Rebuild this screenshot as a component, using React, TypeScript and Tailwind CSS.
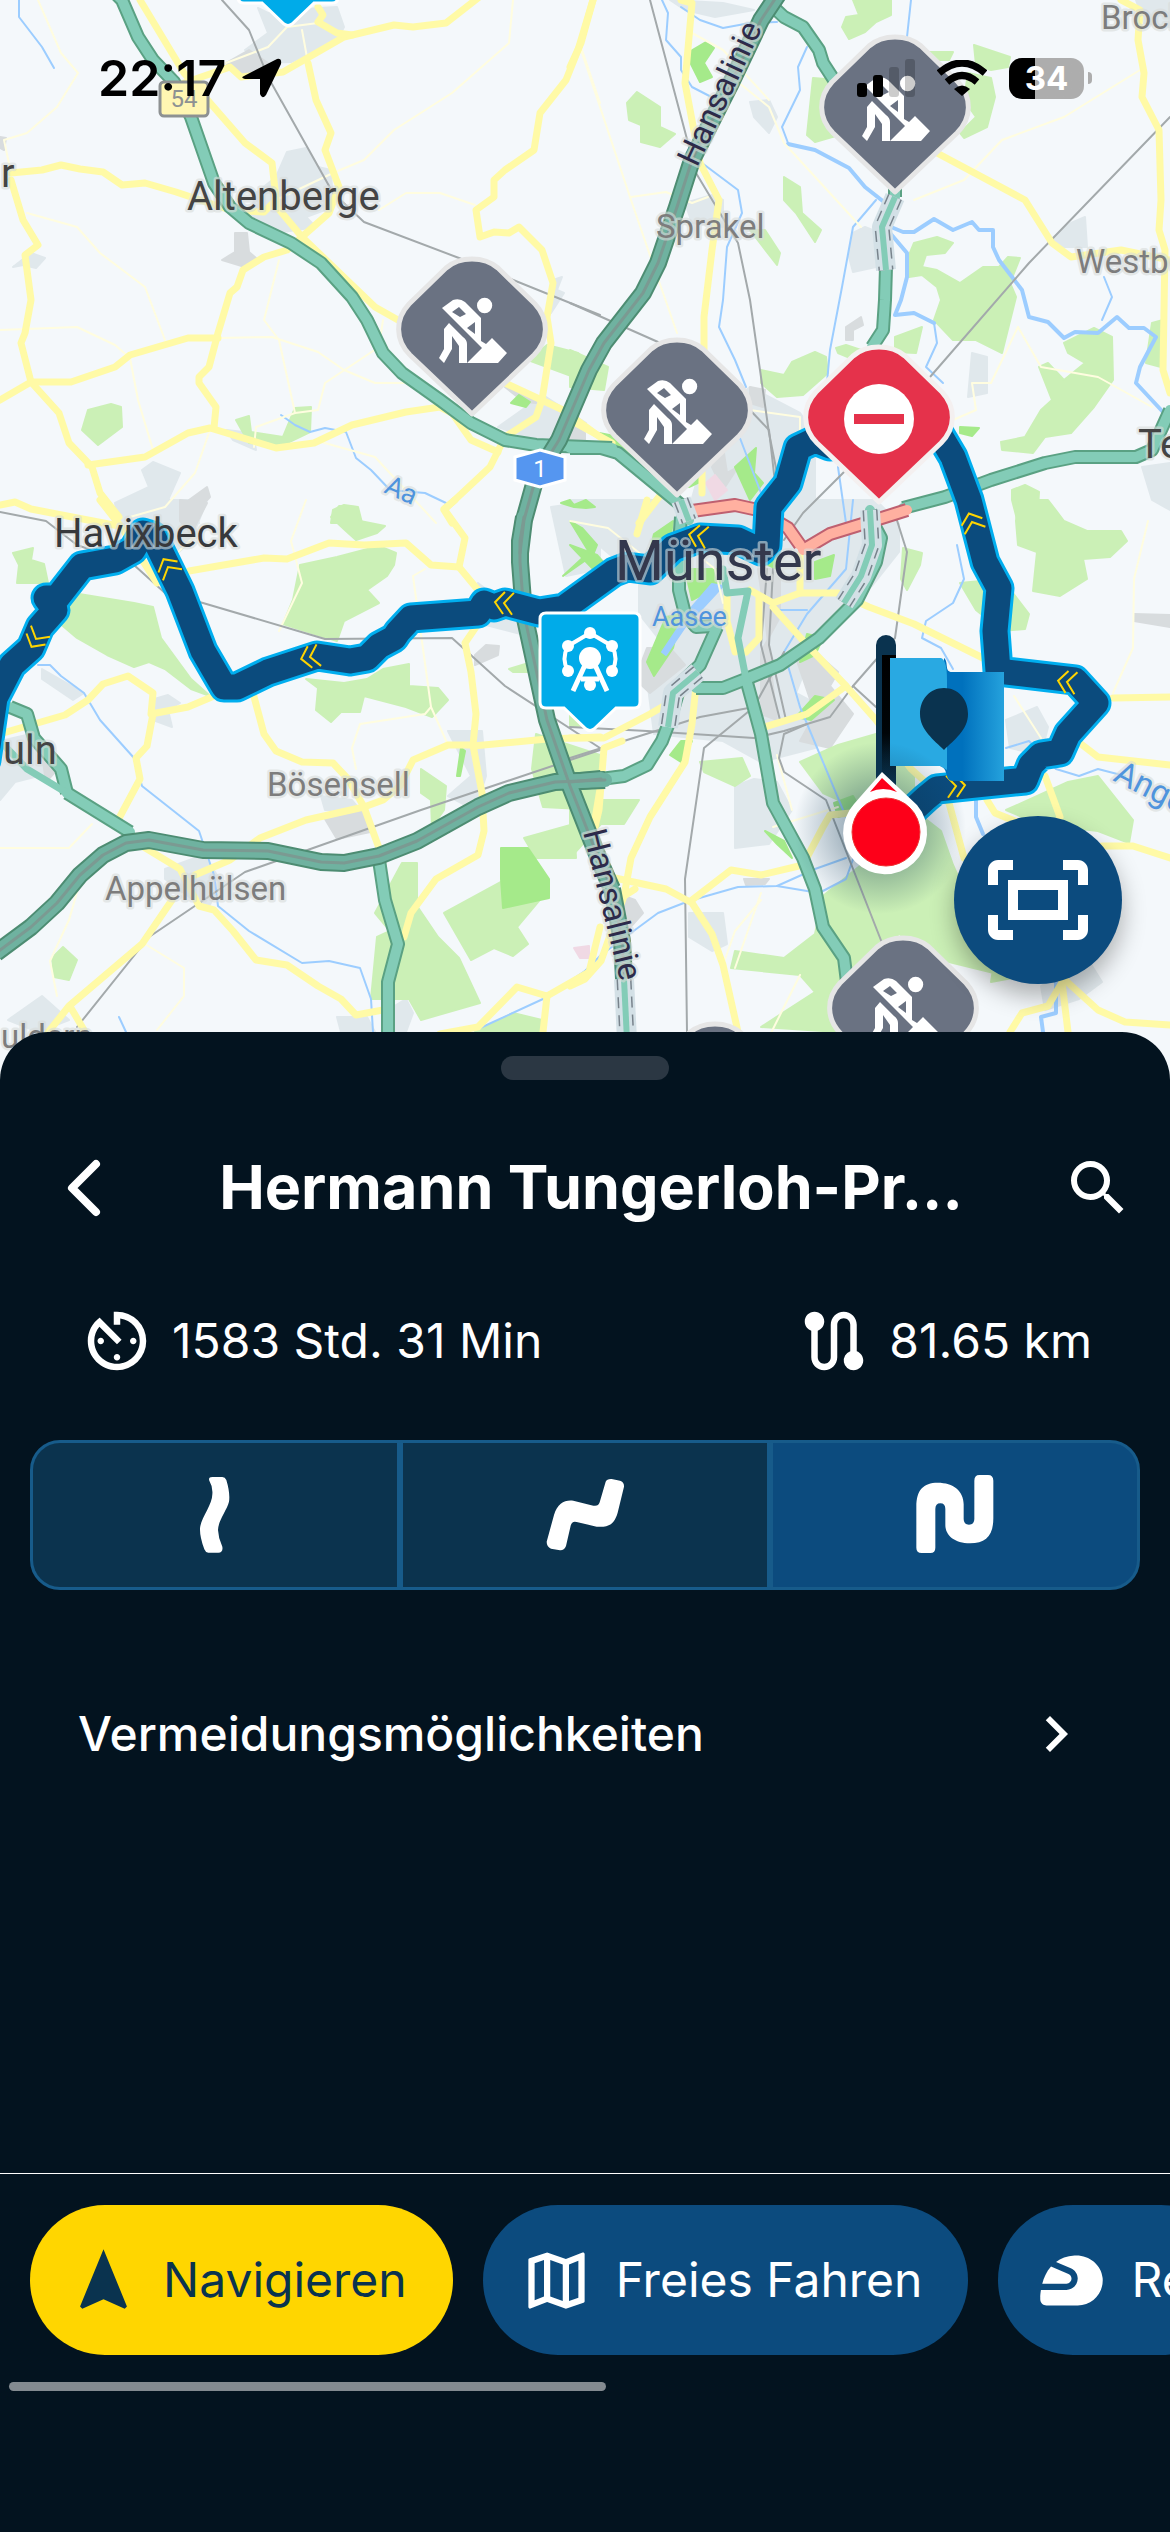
import { ChevronLeft } from 'lucide-react';
import {
  MdAvTimer,
  MdChevronRight,
  MdNavigation,
  MdOutlineFitScreen,
  MdOutlineMap,
  MdRoute,
  MdSearch,
  MdSportsMotorsports,
} from 'react-icons/md';

// The map is digitised in four tiles, each with its own local grid.
type Tile = 'nw' | 'ne' | 'sw' | 'se';
type Shape = [Tile, string];

const ORIGIN: Record<Tile, [number, number, number]> = {
  nw: [0, 0, 1 / 3],
  ne: [570, 0, 1 / 3],
  sw: [0, 500, 0.3444],
  se: [570, 500, 0.3444],
};

function project([tile, points]: Shape) {
  const [ox, oy, sy] = ORIGIN[tile];
  return points
    .split(' ')
    .map((p) => {
      const [x, y] = p.split(',').map(Number);
      return `${Math.round(ox + x * 0.3827)},${Math.round(oy + y * sy)}`;
    })
    .join(' ');
}

const urban: Shape[] = [
  ['nw', '675,25 700,40 830,25 880,20 900,80 880,120 760,185 680,190 640,150 700,100'],
  ['nw', '750,455 800,445 830,500 865,510 870,620 800,650 825,680 740,695 650,650 670,580 720,530'],
  ['nw', '370,1410 400,1385 470,1420 440,1500 500,1510 520,1568 310,1568 300,1510 390,1460'],
  ['nw', '1420,1185 1530,1270 1480,1310 1400,1320 1300,1280'],
  ['nw', '35,800 80,760 118,775 95,805 60,795'],
  ['nw', '1445,840 1468,830 1455,870 1475,880 1440,940'],
  ['nw', '590,1290 660,1300 668,1350 610,1320'],
  ['ne', '470,305 520,300 540,350 520,400 480,350'],
  ['ne', '300,610 370,585 400,600 400,680 320,670'],
  ['ne', '740,700 770,680 810,700 800,800 740,815 730,770'],
  ['ne', '1255,720 1310,670 1345,650 1350,740 1280,740'],
  ['ne', '1050,1060 1090,1070 1090,1180 1040,1190'],
  ['ne', '1495,1400 1568,1390 1568,1530 1520,1500'],
  ['ne', '470,1160 600,1240 640,1300 640,1568 300,1568 380,1250'],
  ['ne', '260,0 400,10 480,30 380,50 300,30'],
  ['ne', '1480,0 1568,0 1568,80 1500,70'],
  ['sw', '360,0 540,0 500,120 440,180 330,90'],
  ['sw', '110,490 220,560 190,580 110,520'],
  ['sw', '395,580 440,565 470,590 440,610 450,660 400,640'],
  ['sw', '1170,670 1260,670 1270,800 1240,900 1170,860 1230,800'],
  ['sw', '840,860 920,870 940,900 850,900'],
  ['sw', '430,1070 530,1030 580,1110 540,1190 430,1100'],
  ['sw', '0,700 80,680 140,790 40,820 0,870'],
  ['sw', '1250,240 1340,320 1400,400 1260,360'],
  ['sw', '1440,20 1568,0 1568,200 1480,220'],
  ['sw', '20,1510 110,1440 180,1510 100,1545'],
  ['sw', '880,1500 960,1500 980,1545 890,1545'],
  ['sw', '1000,1490 1060,1450 1080,1490 1060,1545 1000,1545'],
  ['se', '0,60 0,0 800,0 860,70 860,150 790,250 700,320 640,420 590,560 720,640 640,720 500,760 400,700 220,680 200,520 250,430 180,330 180,230'],
  ['se', '430,830 480,810 540,820 580,900 520,1000 430,1010'],
  ['se', '1140,640 1220,600 1250,660 1230,740 1150,720'],
  ['se', '1230,1410 1350,1330 1390,1400 1330,1450 1240,1480'],
  ['se', '310,1200 400,1200 410,1290 370,1310 310,1270'],
];

const industrial: Shape[] = [
  ['nw', '590,190 650,150 700,190 630,230'],
  ['nw', '615,700 645,700 650,755 670,775 640,800 580,780 615,755'],
  ['nw', '540,1460 550,1490 510,1540 495,1500'],
  ['nw', '0,410 15,415 10,450 0,445'],
  ['nw', '1320,1160 1400,1190 1400,1210 1370,1205'],
  ['ne', '720,980 760,950 765,975 740,990 740,1020 720,1020'],
  ['ne', '0,1270 40,1300 40,1320 0,1325'],
  ['ne', '470,1160 510,1170 505,1220 470,1210'],
  ['ne', '370,1400 400,1340 410,1420 440,1400 400,1470'],
  ['sw', '850,925 950,900 980,960 880,985'],
  ['sw', '1240,450 1270,420 1305,425 1300,450 1240,480'],
  ['sw', '470,0 540,10 500,100 470,60'],
  ['sw', '110,740 145,790 120,820'],
  ['se', '200,430 260,430 300,480 210,560 170,520'],
  ['se', '590,460 640,440 700,500 680,540 740,620 680,720 600,700 640,620'],
  ['se', '490,200 550,200 550,340 500,440 500,620 540,640 510,340'],
  ['se', '1475,330 1568,335 1568,370 1475,350'],
  ['se', '455,1100 520,1100 510,1115 460,1118'],
  ['se', '140,1150 170,1160 190,1200 150,1250'],
];

const woods: Shape[] = [
  ['nw', '290,1212 315,1220 320,1280 257,1335 215,1290 230,1230'],
  ['nw', '617,1260 650,1248 655,1295 740,1310 770,1225 812,1222 810,1295 740,1335 650,1330'],
  ['nw', '870,1530 900,1515 935,1520 945,1568 865,1568'],
  ['nw', '1430,1035 1510,1060 1530,1080 1540,1130 1500,1130 1380,1080'],
  ['ne', '740,0 838,0 840,45 800,65 770,95 730,118 710,80 720,50 755,45'],
  ['ne', '150,310 175,275 235,320 235,380 275,403 235,440 185,425 185,375 155,360'],
  ['ne', '635,235 700,240 720,400 640,425 620,405'],
  ['ne', '560,530 600,560 605,640 655,690 640,725 590,640 560,600'],
  ['ne', '1055,135 1150,170 1145,200 1100,210 1060,195'],
  ['ne', '1040,220 1100,235 1110,290 1090,380 1030,415 1020,400 1060,350 1030,300'],
  ['ne', '930,155 1000,155 990,180 950,180'],
  ['ne', '880,780 900,730 960,712 1000,730 980,760 930,765 920,800 960,810 1020,850 1080,800 1120,800 1145,770 1175,775 1150,850 1165,890 1130,1060 1060,1020 1000,1020 950,960 970,900 960,860 920,825 885,830'],
  ['ne', '500,1110 560,1125 580,1085 640,1055 670,1070 675,1120 610,1185 540,1190 500,1150'],
  ['ne', '850,1010 920,980 905,1060 850,1055'],
  ['ne', '695,1045 720,1035 760,1050 745,1080 700,1060'],
  ['ne', '1290,1030 1370,985 1415,1010 1420,1140 1370,1220 1310,1300 1240,1310 1210,1360 1130,1350 1125,1325 1190,1310 1230,1230 1260,1200 1225,1100 1250,1090 1290,1140 1345,1090 1300,1060'],
  ['ne', '1155,1470 1190,1455 1225,1475 1220,1568 1170,1568 1155,1500'],
  ['ne', '1520,970 1550,960 1545,1100 1505,1090'],
  ['ne', '470,690 510,690 550,760 540,795'],
  ['ne', '0,1050 100,1100 90,1170 0,1160'],
  ['sw', '865,50 885,18 930,20 940,60 1005,75 985,95 930,115 905,90'],
  ['sw', '785,190 880,165 990,135 1035,155 1030,190 1010,220 960,260 990,300 900,350 880,410 740,360 765,290'],
  ['sw', '45,240 50,190 35,155 85,140 80,175 115,185 125,240'],
  ['sw', '190,270 350,300 400,310 420,400 500,520 550,570 500,550 430,490 390,470 350,485 280,450 200,400 150,350'],
  ['sw', '800,520 900,530 960,520 1000,490 1070,475 1070,540 1145,545 1170,580 1130,630 1060,600 950,570 940,615 890,615 865,645 825,610 830,545'],
  ['sw', '1400,680 1568,740 1568,900 1420,890 1390,780'],
  ['sw', '1330,490 1390,470 1400,500 1340,500'],
  ['sw', '1100,780 1165,830 1160,900 1130,950 1125,870 1100,850'],
  ['sw', '1050,1055 1090,1055 1090,1180 1145,1270 1200,1330 1255,1460 1100,1510 1070,1450 970,1450 985,1270 1020,1250 980,1200'],
  ['sw', '1160,1200 1310,1110 1420,1150 1350,1240 1380,1290 1340,1325 1290,1300 1230,1335'],
  ['sw', '1370,980 1500,940 1505,1040 1400,1040'],
  ['sw', '135,1330 165,1298 200,1335 180,1395 140,1385'],
  ['sw', '1240,1545 1340,1490 1415,1510 1415,1545'],
  ['se', '1170,0 1250,0 1290,60 1350,90 1440,90 1455,120 1410,165 1340,170 1350,230 1280,280 1210,265 1220,150 1170,130 1165,60'],
  ['se', '870,140 920,155 915,190 880,260 865,230'],
  ['se', '1020,240 1130,230 1200,330 1190,375 1130,380 1060,320'],
  ['se', '600,760 700,710 800,680 900,800 900,900 970,960 1000,1060 1130,1380 980,1340 860,1260 720,1400 700,1545 500,1530 640,1430 600,1380 420,1360 430,1310 560,1330 640,1260 660,1150 760,1060 720,960 760,900 660,850'],
  ['se', '1140,900 1300,820 1380,800 1470,930 1460,995 1380,960 1290,950 1180,920'],
  ['se', '0,870 180,870 140,940 80,940 0,1040'],
  ['se', '340,760 450,750 470,800 430,830 350,790'],
  ['se', '0,580 70,570 60,650 0,660'],
  ['se', '1110,1330 1200,1380 1100,1400'],
];

const parks: Shape[] = [
  ['nw', '1335,1210 1355,1185 1385,1205 1375,1222'],
  ['nw', '1467,1510 1490,1500 1500,1515 1530,1500 1555,1520 1530,1525 1500,1520'],
  ['ne', '310,155 355,125 375,145 350,190 370,230 340,245 310,180'],
  ['ne', '75,1300 130,1310 180,1380 130,1350'],
  ['ne', '430,1400 485,1345 480,1420 505,1450 470,1500'],
  ['ne', '1020,1280 1070,1285 1050,1308 1020,1300'],
  ['ne', '310,1460 340,1400 350,1440'],
  ['sw', '1310,1010 1380,1010 1435,1100 1435,1155 1315,1185 1310,1100'],
  ['sw', '1490,60 1520,80 1560,130 1550,160 1470,220 1540,150'],
  ['sw', '1195,800 1205,720 1215,730 1203,800'],
  ['se', '0,130 70,160 110,210 60,200'],
  ['se', '200,470 250,340 290,330 270,430 220,510'],
  ['se', '300,200 400,200 390,250 320,290'],
  ['se', '620,390 660,400 640,450 600,470'],
  ['se', '500,140 550,130 540,200 500,180'],
  ['se', '640,570 690,580 630,640 590,630'],
  ['se', '690,880 740,860 760,900 700,920'],
  ['se', '510,960 560,990 580,1040 540,1000'],
  ['se', '260,740 290,700 320,700 290,760'],
  ['se', '220,100 270,60 260,120 200,180'],
  ['se', '640,180 690,160 680,220 640,230'],
];

const minor: Shape[] = [
  ['nw', '100,0 160,160 205,220 150,320 70,400 10,420 30,520'],
  ['nw', '1340,0 1330,130 1180,280 1030,390 950,480 870,520 720,600'],
  ['nw', '70,640 200,680 260,760 380,860 430,1020'],
  ['nw', '0,990 200,980 300,1035 340,1075 360,1200 400,1350'],
  ['nw', '570,1015 710,1010 830,1055 900,1110 980,1150 1060,1150 1180,1210'],
  ['nw', '730,780 690,960 730,1020 770,1240'],
  ['nw', '550,1290 510,1420 430,1520 340,1550'],
  ['nw', '590,190 700,140 750,80 830,70'],
  ['nw', '790,90 805,190'],
  ['nw', '1000,960 990,1040 850,1150 830,1230 770,1240 670,1280 665,1340'],
  ['nw', '990,630 1060,580 1150,580 1240,615'],
  ['nw', '820,1320 980,1370 1140,1568'],
  ['nw', '1520,150 1568,310'],
  ['ne', '1490,210 1290,350 1130,420 1030,540 900,600'],
  ['ne', '400,210 520,320 560,430 760,680'],
  ['ne', '30,150 160,600 220,800 280,1000'],
  ['ne', '320,100 400,150 520,300'],
  ['ne', '160,590 250,575 320,610 360,590'],
  ['ne', '1170,980 1230,1100 1380,1130 1520,1220'],
  ['ne', '1170,980 1100,1150 1050,1150 1060,1230 940,1290'],
  ['ne', '470,1230 600,1250 600,1400'],
  ['sw', '930,780 920,720 940,650 1110,620 1125,600 1080,220 1110,200'],
  ['sw', '1125,600 1170,710'],
  ['sw', '0,1010 180,1010 240,940'],
  ['sw', '380,1290 480,1360 480,1440 410,1540'],
  ['sw', '210,1110 180,1220 130,1340 150,1440'],
  ['sw', '800,0 760,120 790,240 730,380'],
  ['sw', '440,180 540,70'],
  ['se', '430,1360 500,1140'],
  ['se', '600,1380 520,1560'],
  ['se', '1510,60 1475,230 1470,430 1420,560'],
  ['se', '1160,570 1230,690'],
  ['se', '530,950 700,890'],
  ['se', '0,60 100,80 200,170'],
  ['se', '300,130 380,200 400,300'],
  ['se', '580,900 540,740'],
  ['se', '400,1350 430,1250 500,1160'],
];

const rails: Shape[] = [
  ['nw', '580,0 650,90 700,230 870,580 950,665 1200,775 1568,945'],
  ['ne', '210,0 330,520 440,730 470,900 520,1300 540,1420'],
  ['ne', '0,910 230,1025'],
  ['ne', '470,1230 520,1290 540,1500'],
  ['ne', '1568,350 1200,790 940,1130'],
  ['ne', '720,1410 610,1540 560,1620'],
  ['sw', '0,35 120,60 200,130 350,190 430,270 530,300 850,405 1180,400 1320,540 1568,720'],
  ['sw', '1568,725 1100,900 640,1080 390,1270 200,1530'],
  ['se', '0,750 340,630 480,600 560,440'],
  ['se', '0,660 200,670 480,690 560,670 680,630 740,540 850,400 880,150 850,40'],
  ['se', '620,650 560,680 545,750 560,790 670,870 820,1300'],
  ['se', '480,600 350,720 300,1100 305,1545'],
  ['se', '550,640 500,420 515,200'],
  ['se', '565,640 520,420 530,200'],
  ['se', '740,540 800,600'],
];

const streams: Shape[] = [
  ['nw', '50,0 50,50 110,140 140,205'],
  ['nw', '735,1245 770,1275 810,1295 850,1285 905,1295 930,1375 970,1410 1020,1470 1110,1480 1165,1510'],
  ['ne', '240,0 255,40 250,120 290,170 290,210 320,260 400,310'],
  ['ne', '290,20 340,60 400,85 470,70 540,65'],
  ['ne', '345,490 440,570 450,640 410,740 400,900 390,980 430,1080 460,1160'],
  ['ne', '890,0 880,110'],
  ['ne', '620,140 595,200 600,270 555,380 570,430'],
  ['ne', '800,600 740,680 710,860 680,1050 670,1180'],
  ['ne', '950,970 960,1030 930,1100 975,1150'],
  ['ne', '1395,830 1415,890 1390,960'],
  ['ne', '440,1300 500,1480 530,1568'],
  ['ne', '700,1400 720,1568'],
  ['sw', '100,480 130,478 160,510 220,560 260,640 350,750 370,830 520,960 560,1090 570,1180 650,1250 790,1345 860,1340 940,1360 970,1450 975,1545'],
  ['sw', '310,1500 330,1545'],
  ['sw', '1250,1535 1420,1450 1568,1340'],
  ['se', '0,1410 80,1320 230,1200 310,1165 440,1125 540,1120 640,1070 720,1040'],
  ['se', '740,0 720,200 620,330 560,440 600,600 720,920 750,1010 720,1100 650,1140 540,1120'],
  ['se', '1010,130 1030,230 1000,300 930,350 920,400 970,430 1000,490'],
  ['se', '540,320 620,320'],
  ['se', '1140,720 1200,700 1270,780 1330,800 1380,780 1450,800'],
];

const rivers: Shape[] = [
  ['ne', '570,433 640,450 730,505 770,560 820,605'],
  ['ne', '840,680 870,697 900,695 950,658 1000,690 1050,665 1070,690 1105,690 1105,740 1120,780 1180,870 1200,950 1250,965 1290,1015 1320,995 1380,1000 1430,950 1460,985 1500,985 1530,1010 1490,1100 1480,1150 1550,1235'],
  ['ne', '835,700 880,760 880,830 865,900 850,945 900,940 950,970'],
  ['se', '1060,870 1060,920 1080,970'],
  ['se', '1270,1400 1270,1490 1230,1500 1235,1545'],
];

const secondary: Shape[] = [
  ['nw', '365,0 480,220 640,430 710,490 725,620 790,710 980,920 1040,960'],
  ['nw', '480,250 600,200 630,230 740,215 900,110 1030,75 1080,80 1165,68 1250,-5'],
  ['nw', '830,20 845,45 830,65 880,100 920,105'],
  ['nw', '805,190 825,300 865,400 850,450 885,560 860,640 750,750 690,770 635,810 620,860 600,880 570,1000 545,1100 520,1130 520,1150 565,1220 560,1285'],
  ['nw', '1550,0 1510,150 1480,240 1410,340 1395,450 1320,510 1290,540 1290,590 1245,630 1255,710 1290,695 1330,700 1355,680 1415,750 1445,850 1430,950 1440,1030 1415,1200 1400,1250 1320,1310 1280,1400 1160,1530 1180,1568'],
  ['nw', '1320,1150 1470,1230 1568,1310'],
  ['nw', '30,520 110,510 160,495 210,508 270,515 320,555 380,550 460,575 600,630 690,635 720,600'],
  ['nw', '30,540 60,660 100,735 65,765 80,900 65,1000 55,1030 80,1145 155,1240 180,1330 240,1400 260,1480 310,1550'],
  ['nw', '0,1200 80,1145 185,1145 300,1100 340,1065 490,1015 570,1015'],
  ['nw', '230,1395 380,1370 490,1300 550,1285 720,1345 820,1330 920,1275 1060,1235 1150,1220 1180,1240 1230,1320 1300,1355'],
  ['ne', '60,0 30,130 0,200'],
  ['ne', '290,0 320,10 300,250 340,490 390,600 370,750 350,950 350,1050'],
  ['ne', '345,1400 345,1480'],
  ['ne', '960,460 1190,600 1260,730 1310,770 1440,750 1568,780'],
  ['ne', '1440,0 1490,30 1485,120 1500,220 1495,290 1540,390 1545,600 1540,690 1555,750 1550,1110 1568,1180'],
  ['ne', '0,1260 110,1330'],
  ['ne', '240,1480 180,1568'],
  ['sw', '0,15 40,5 80,25 310,75'],
  ['sw', '260,0 320,80 410,240'],
  ['sw', '495,205 690,168 750,170 860,125 950,132 1060,125 1125,190 1200,195 1250,260'],
  ['sw', '1190,0 1160,25 1215,110 1200,195'],
  ['sw', '1250,360 1215,415 1230,500 1245,620 1235,710 1260,850 1265,960 1250,1030 1140,1100 1075,1200 1055,1270'],
  ['sw', '1235,710 1170,712 1080,755 1045,830 1000,870 950,890 800,930 680,980 600,1045 510,1090'],
  ['sw', '1235,715 1430,695 1568,688'],
  ['sw', '660,560 690,680 720,730 790,760 870,765 910,810 950,890 990,1010'],
  ['sw', '0,680 170,625 230,580 270,535 335,510 400,560 395,620 490,600 560,570'],
  ['sw', '400,620 385,715 355,750 365,810 305,935'],
  ['sw', '370,1005 470,1070 520,1180 560,1190 610,1250 670,1335 750,1350 830,1410 890,1450 930,1495 1000,1480'],
  ['sw', '450,1160 370,1290 180,1470 110,1568'],
  ['sw', '185,1475 220,1540'],
  ['sw', '1150,1550 1250,1530 1350,1415 1430,1440 1540,1370 1568,1240'],
  ['sw', '1430,1440 1420,1545'],
  ['sw', '1568,840 1550,960'],
  ['se', '0,690 90,690 210,620 290,570'],
  ['se', '135,700 90,720 75,900 65,950'],
  ['se', '330,540 320,650 300,760 210,920 160,1040 140,1150'],
  ['se', '80,1090 250,1130 320,1170 370,1260 400,1350 440,1545'],
  ['se', '320,1160 420,1075 500,1090 610,1060 660,950 680,915 760,905'],
  ['se', '490,665 620,620 720,540'],
  ['se', '530,310 620,420 720,540 800,640 890,780 990,880 1030,1040'],
  ['se', '470,260 530,300 600,270 700,270 780,310 900,360 1080,460'],
  ['se', '600,160 600,270'],
  ['se', '495,280 495,400 460,440'],
  ['se', '410,280 410,350 430,440'],
  ['se', '170,1130 140,1150 80,1340 40,1390 0,1410'],
  ['se', '1420,575 1568,572'],
  ['se', '1300,680 1380,745 1568,770'],
  ['se', '1390,1005 1470,1005 1568,1040'],
  ['se', '1240,800 1280,920'],
  ['se', '1290,1390 1250,1470 1180,1490 1150,1545'],
  ['se', '1285,1400 1300,1545'],
  ['se', '1290,1390 1380,1480 1450,1515 1568,1525'],
  ['se', '1090,870 1110,910 1180,940'],
  ['se', '175,100 200,0'],
];

const trunks: Shape[] = [
  ['nw', '300,-20 320,0 360,110 400,180 455,245 500,350 560,550 600,620 650,670 760,730 840,790 920,890 960,960 1000,1060 1050,1120 1150,1200 1230,1270 1320,1320 1400,1335 1600,1345'],
  ['ne', '0,1345 80,1345 125,1360 290,1515 310,1560'],
  ['ne', '520,10 560,50 610,80 650,150 660,190 690,240 848,400 848,590'],
  ['ne', '825,800 822,900 818,990 790,1040'],
  ['ne', '870,1525 980,1490 1100,1440 1240,1390 1320,1370 1480,1370 1520,1350 1568,1230'],
  ['se', '290,50 285,130 285,260 300,330 330,370 370,365'],
  ['se', '385,370 340,480 290,530 260,640 240,700 200,770 140,800 60,812'],
  ['se', '330,545 400,545 460,520 550,480 650,400 750,290 800,180 812,110 790,60 785,30'],
  ['se', '460,520 500,680 530,880 610,1040 640,1130 660,1240 715,1330 725,1400'],
  ['sw', '25,600 70,620 90,690 160,780 175,850'],
  ['sw', '175,850 340,965'],
  ['sw', '990,1045 1005,1160 1040,1290 1015,1400 1015,1560'],
];

const innerRing: Shape[] = [
  ['se', '400,200 410,270 465,265 440,400 460,520'],
  ['sw', '0,700 70,780 175,850'],
];

const jams: Shape[] = [
  ['se', '300,35 430,15 490,30 570,80 600,130'],
  ['se', '610,145 680,100 780,65 880,30'],
];

const motorways: Shape[] = [
  ['ne', '545,-20 500,60 420,250 320,480 280,620 230,790 190,880 90,1030 50,1110 -30,1320 -90,1430 -120,1560 -131,1660'],
  ['sw', '1370,50 1358,120 1358,180 1370,330 1430,640 1490,830 1568,1050 1600,1130'],
  ['sw', '-10,1315 80,1240 150,1170 210,1090 270,1030 330,995 390,988 530,1015 700,1020 840,1050 900,1055 990,1035 1090,990 1250,890 1330,850 1450,820 1580,812'],
  ['se', '0,820 80,810'],
  ['se', '110,1130 135,1280 142,1390'],
];

const tunnels: Shape[] = [
  ['ne', '848,590 815,680 825,810'],
  ['se', '290,0 310,60'],
  ['se', '142,1390 148,1568'],
  ['se', '335,500 270,560 255,660'],
  ['se', '785,30 790,130 760,220 715,300'],
];

const route =
  '900,822 926,798 937,789 1025,780 1031,765 1041,755 1060,752 1068,734 1096,703 1075,680 998,671 995,631 999,588 985,562 969,500 953,457 937,430 914,410 830,446 815,440 798,448 788,483 769,507 767,545 761,551 738,540 700,538 673,548 650,570 627,567 614,572 564,608 539,612 505,603 494,607 484,603 478,613 411,618 398,632 394,638 379,646 367,658 350,661 317,656 268,672 237,687 224,687 203,651 180,591 153,536 143,533 133,550 115,560 82,566 57,598 46,598 55,610 40,627 31,648 12,665 -5,698 -14,760';

const arrows: [number, number, number][] = [
  [168, 567, 60],
  [310, 657, -12],
  [504, 603, 5],
  [36, 639, -60],
  [698, 536, 10],
  [972, 522, 70],
  [1067, 682, 8],
  [956, 786, 175],
];

type Label = { text: string; x: number; y: number; size: number; color: string; rotate?: number };

const labels: Label[] = [
  { text: 'Altenberge', x: 187, y: 210, size: 40, color: '#444444' },
  { text: 'r', x: 1, y: 187, size: 40, color: '#444444' },
  { text: 'Havixbeck', x: 54, y: 547, size: 40, color: '#37393c' },
  { text: 'uln', x: 3, y: 764, size: 40, color: '#444444' },
  { text: 'Telgte', x: 1138, y: 458, size: 40, color: '#444444' },
  { text: 'Sprakel', x: 656, y: 238, size: 33, color: '#7d7d7d' },
  { text: 'Brock', x: 1101, y: 29, size: 33, color: '#7d7d7d' },
  { text: 'Westbevern', x: 1076, y: 273, size: 33, color: '#7d7d7d' },
  { text: 'Bösensell', x: 267, y: 796, size: 33, color: '#7d7d7d' },
  { text: 'Appelhülsen', x: 105, y: 900, size: 33, color: '#7d7d7d' },
  { text: 'uldern', x: 1, y: 1048, size: 33, color: '#7d7d7d' },
  { text: 'Münster', x: 615, y: 580, size: 56, color: '#34384d' },
  { text: 'Hansalinie', x: 697, y: 168, size: 33, color: '#2d2b4a', rotate: -65 },
  { text: 'Hansalinie', x: 583, y: 832, size: 33, color: '#2d2b4a', rotate: 76 },
  { text: 'Aasee', x: 652, y: 626, size: 27, color: '#4f94dd' },
  { text: 'Aa', x: 383, y: 492, size: 27, color: '#4f94dd', rotate: 24 },
  { text: 'Angel', x: 1112, y: 780, size: 33, color: '#4f94dd', rotate: 27 },
];

function Areas({ shapes, fill }: { shapes: Shape[]; fill: string }) {
  return (
    <g fill={fill} stroke={fill} strokeWidth={2} strokeLinejoin="round">
      {shapes.map((s, i) => (
        <polygon key={i} points={project(s)} />
      ))}
    </g>
  );
}

function Lines({ shapes, color, width, dash, cap = 'round' }: { shapes: Shape[]; color: string; width: number; dash?: string; cap?: 'round' | 'butt' }) {
  return (
    <g fill="none" stroke={color} strokeWidth={width} strokeLinejoin="round" strokeLinecap={cap} strokeDasharray={dash}>
      {shapes.map((s, i) => (
        <polyline key={i} points={project(s)} />
      ))}
    </g>
  );
}

const PIN_SHAPE =
  'M0 83L-62 24C-77 9 -77 -12 -63 -27L-26 -63C-12 -75 12 -75 26 -63L63 -27C77 -12 77 9 62 24Z';

function RoadworkPin({ x, y }: { x: number; y: number }) {
  return (
    <g transform={`translate(${x} ${y})`}>
      <path d={PIN_SHAPE} fill="#6a7282" stroke="#e6e6e6" strokeWidth="5" strokeLinejoin="round" />
      <g fill="#fff">
        <ellipse cx="12.6" cy="-25.5" rx="7.6" ry="7.8" />
        <path
          fillRule="evenodd"
          d="M-30 -23L-19 -31Q-12 -33 -7 -29L9 -13V10L14 13L20 7L35 22L26 32H-5L10 17ZM-20 -19L-12 -14L-6 -17L-13 -24ZM-5 -3L3 3V-9Z"
        />
        <path d="M-23 -8L-9 6Q-5 9 -5 13V32H-13V15L-20 5V18L-28 32L-33 27L-28 18V-2Z" />
      </g>
    </g>
  );
}

function ClosurePin({ x, y }: { x: number; y: number }) {
  return (
    <g transform={`translate(${x} ${y})`}>
      <path d={PIN_SHAPE} fill="#e5324b" stroke="#f4f0f0" strokeWidth="5" strokeLinejoin="round" />
      <circle r="35" fill="#fff" />
      <rect x="-25" y="-5" width="50" height="10" fill="#e5324b" />
    </g>
  );
}

function AttractionPin({ x, y }: { x: number; y: number }) {
  const cabins = [[0, -45], [22, -32], [22, -7], [0, 7], [-22, -7], [-22, -32]];
  return (
    <g transform={`translate(${x} ${y})`}>
      <path
        d="M-44 -65H44Q50 -65 50 -59V24Q50 30 44 30H26L4 51Q0 54 -4 51L-26 30H-44Q-50 30 -50 24V-59Q-50 -65 -44 -65Z"
        fill="#00abe9"
        stroke="#fff"
        strokeWidth="3"
      />
      <path d="M0 -45L22 -32Q29 -19 22 -7M0 -45L-22 -32Q-29 -19 -22 -7" fill="none" stroke="#fff" strokeWidth="4" />
      {cabins.map(([cx, cy]) => (
        <circle key={`${cx},${cy}`} cx={cx} cy={cy} r="6" fill="#fff" />
      ))}
      <circle cy="-20" r="11" fill="#fff" />
      <path d="M-5 -13L-17 13M5 -13L17 13M-9 1H9" fill="none" stroke="#fff" strokeWidth="5" />
    </g>
  );
}

function DestinationFlag() {
  return (
    <g>
      <rect x="876" y="635" width="20" height="165" rx="10" fill="#0a334f" />
      <rect x="882" y="655" width="14" height="130" fill="url(#pole)" />
      <path d="M944 658C949 662 944 672 952 672H1004V781H953C944 781 949 768 940 766Z" fill="url(#flag)" />
      <path d="M890 658H941Q947 660 947 680V770L940 766H890Z" fill="#29a9e2" />
      <path d="M944 688C958 688 968 699 968 714C968 730 954 740 944 750C934 740 920 730 920 714C920 699 930 688 944 688Z" fill="#0a334f" />
    </g>
  );
}

function PositionDot() {
  return (
    <g>
      <circle cx="880" cy="828" r="86" fill="url(#halo)" />
      <path d="M882 772L917 805A42 42 0 1 1 854 804Z" fill="#fff" />
      <circle cx="886" cy="832" r="34" fill="#fd0019" stroke="#e33" strokeWidth="1" />
      <path d="M882 778L897 792Q883 786 870 792Z" fill="#fd0019" />
    </g>
  );
}

function RouteMap() {
  return (
    <svg viewBox="0 0 1170 1080" className="block w-full h-auto bg-[#f4f8fb] font-['Roboto',sans-serif]" role="img" aria-label="Karte">
      <defs>
        <radialGradient id="halo">
          <stop offset="0.4" stopColor="#0a334f" stopOpacity="0.35" />
          <stop offset="1" stopColor="#0a334f" stopOpacity="0" />
        </radialGradient>
        <linearGradient id="pole" x1="0" y1="0" x2="0" y2="1">
          <stop offset="0" stopColor="#000" />
          <stop offset="0.6" stopColor="#000508" />
          <stop offset="1" stopColor="#0a334f" />
        </linearGradient>
        <linearGradient id="flag">
          <stop offset="0.15" stopColor="#0071bd" />
          <stop offset="0.35" stopColor="#0071bd" />
          <stop offset="1" stopColor="#25a2dd" />
        </linearGradient>
      </defs>

      <Areas shapes={urban} fill="#e0e8ec" />
      <Areas shapes={industrial} fill="#d8dcde" />
      <Areas shapes={woods} fill="#cbf0b6" />
      <Areas shapes={parks} fill="#a5ea8a" />
      <Areas shapes={[['se', '240,440 320,310 370,245 400,250 300,370 250,450']]} fill="#9ccdff" />
      <Areas shapes={[['ne', '355,1450 380,1425 410,1470 380,1500'], ['sw', '1500,1300 1540,1295 1540,1330 1515,1330']]} fill="#f0d9e4" />
      <Lines shapes={streams} color="#9ccdff" width={2} />
      <Lines shapes={rivers} color="#9ccdff" width={4} />
      <Lines shapes={minor} color="#fffde0" width={2} />
      <Lines shapes={rails} color="#a3a9ab" width={2} />
      <Lines shapes={secondary} color="#fffaa6" width={7} />
      <Lines shapes={trunks} color="#5aa183" width={14} cap="butt" />
      <Lines shapes={trunks} color="#83ccb7" width={10} />
      <Lines shapes={innerRing} color="#83ccb7" width={7} />
      <Lines shapes={jams} color="#bf6070" width={14} cap="butt" />
      <Lines shapes={jams} color="#ffb0a0" width={10} />
      <Lines shapes={motorways} color="#4d8c72" width={18} cap="butt" />
      <Lines shapes={motorways} color="#6fb2a0" width={14} />
      <Lines shapes={motorways} color="#7b9a92" width={3} />
      <Lines shapes={tunnels} color="#d3e0e6" width={20} cap="butt" />
      <Lines shapes={tunnels} color="#78838c" width={15} dash="11 7" cap="butt" />
      <Lines shapes={tunnels} color="#d3e0e6" width={12} cap="butt" />
      <Lines shapes={tunnels} color="#83ccb7" width={6} cap="butt" />

      <g fill="none" strokeLinejoin="round" strokeLinecap="round">
        <polyline points={route} stroke="#00aeef" strokeWidth="31" />
        <polyline points={route} stroke="#0b4b7d" strokeWidth="25" />
      </g>
      {arrows.map(([x, y, angle]) => (
        <path
          key={`${x},${y}`}
          transform={`translate(${x} ${y}) rotate(${angle})`}
          d="M0 -11L-9 0L0 11M9 -11L0 0L9 11"
          fill="none"
          stroke="#ffd500"
          strokeWidth="2"
        />
      ))}

      <rect x="160" y="82" width="48" height="34" rx="4" fill="#fff6b2" stroke="#8d9192" strokeWidth="3" />
      <text x="184" y="107" fontSize="24" textAnchor="middle" fill="#8d9192">54</text>
      <path d="M540 450L565 457V480L540 487L515 480V457Z" fill="#5596f0" stroke="#fff" strokeWidth="3" />
      <text x="540" y="477" fontSize="24" textAnchor="middle" fill="#fff">1</text>

      {labels.map(({ text, x, y, size, color, rotate = 0 }) => (
        <text
          key={`${text}${x}`}
          transform={`translate(${x} ${y}) rotate(${rotate})`}
          fontSize={size}
          fill={color}
          stroke="#d8dcda"
          strokeOpacity="0.6"
          strokeWidth="5"
          strokeLinejoin="round"
          paintOrder="stroke"
        >
          {text}
        </text>
      ))}

      <AttractionPin x={288} y={-27} />
      <AttractionPin x={590} y={678} />
      <RoadworkPin x={472} y={331} />
      <RoadworkPin x={677} y={412} />
      <RoadworkPin x={895} y={109} />
      <RoadworkPin x={715} y={1096} />
      <RoadworkPin x={903} y={1010} />
      <ClosurePin x={879} y={419} />
      <DestinationFlag />
      <PositionDot />
    </svg>
  );
}

function StatusBar() {
  return (
    <div className="absolute inset-x-0 top-0 flex items-center justify-between pt-12 pl-[98px] pr-[78px] text-black">
      <div className="flex items-center gap-4">
        <span className="text-[50px] leading-[60px] font-semibold">22:17</span>
        <svg viewBox="0 0 40 40" className="size-10" fill="currentColor">
          <path d="M2 18L35 1Q40 0 39 6L24 37Q20 42 18 36V21H3Q-2 20 2 18Z" />
        </svg>
      </div>
      <div className="flex items-center gap-[22px]">
        <svg viewBox="0 0 58 38" className="w-[58px] h-[38px]" fill="currentColor">
          <rect y="24" width="10" height="14" rx="3" />
          <rect x="16" y="16" width="10" height="22" rx="3" />
          <rect x="32" y="8" width="10" height="30" rx="3" opacity="0.2" />
          <rect x="48" width="10" height="38" rx="3" opacity="0.2" />
        </svg>
        <svg viewBox="0 0 50 36" className="w-[50px] h-9" fill="none" stroke="currentColor" strokeWidth="7">
          <path d="M2 13Q25 -7 48 13" />
          <path d="M10 22Q25 9 40 22" />
          <path d="M25 36L17 29Q25 22 33 29Z" fill="currentColor" stroke="none" />
        </svg>
        <div className="flex items-center gap-1">
          <span className="w-[75px] h-[41px] rounded-[13px] bg-linear-to-r from-black from-35% to-[#adadad] to-35% text-center text-[33px] leading-[41px] font-bold text-white">
            34
          </span>
          <span className="w-1 h-3 rounded-r-full bg-[#adadad]" />
        </div>
      </div>
    </div>
  );
}

// Curviness levels, from a direct road to a very winding one
const curves = [
  {
    name: 'Wenig kurvig',
    d: 'M133 47Q129 36 142 36H172Q180 36 184 45Q196 85 192 110C186 135 160 165 159 195Q160 220 172 245Q175 262 160 263H130Q121 262 118 253Q104 215 105 190C107 160 142 120 142 88Q144 65 133 47Z',
  },
  {
    name: 'Kurvig',
    d: 'M212 50Q216 41 230 42L255 47Q268 51 267 65L248 143C238 178 220 188 185 185L125 171Q111 167 107 182L93 243Q87 257 75 256L48 251Q35 245 35 230L57 150C68 113 90 104 115 107L175 122Q190 125 194 112Z',
  },
  {
    name: 'Sehr kurvig',
    d: 'M34 248V125C34 75 55 53 98 53C145 53 176 78 176 118V162Q176 179 192 179Q208 179 208 162V47Q208 30 223 30H249Q265 30 265 47V160C265 212 242 235 195 235C150 235 121 212 121 180V132Q121 115 106 115Q91 115 91 132V248Q91 264 76 264H50Q34 264 34 248Z',
    active: true,
  },
];

function CurveSelector() {
  return (
    <div className="mx-[30px] mt-15 grid grid-cols-3 gap-1.5 h-[150px] overflow-hidden rounded-[30px] border-3 border-[#175b8a] bg-[#175b8a]">
      {curves.map(({ name, d, active }) => (
        <button
          key={name}
          aria-label={name}
          aria-pressed={!!active}
          className={active ? 'flex items-center justify-center bg-[#0c4b7e]' : 'flex items-center justify-center bg-[#0b334e]'}
        >
          <svg viewBox="0 0 300 300" className="size-25" fill="#fff">
            <path d={d} />
          </svg>
        </button>
      ))}
    </div>
  );
}

function ActionBar() {
  const pill = 'flex shrink-0 items-center gap-[22px] h-[150px] rounded-full pl-9 pr-[46px] text-[48px]';
  return (
    <div className="mt-auto border-t border-white pt-[31px] pb-[141px]">
      <div className="flex gap-[30px] overflow-hidden pl-[30px]">
        <button className={`${pill} bg-[#ffd600] text-[#0a334f]`}>
          <MdNavigation className="size-[75px]" />
          Navigieren
        </button>
        <button className={`${pill} bg-[#0c4b7e]`}>
          <MdOutlineMap className="size-[75px]" />
          Freies Fahren
        </button>
        <button className={`${pill} bg-[#0c4b7e]`}>
          <MdSportsMotorsports className="size-[75px]" />
          Re
        </button>
      </div>
      <div className="mt-[27px] ml-[9px] w-[51%] h-[9px] rounded-full bg-[#838a90]" />
    </div>
  );
}

export default function App() {
  return (
    <div className="flex min-h-screen flex-col overflow-hidden bg-[#03131f] font-['Inter',sans-serif]">
      <div className="relative">
        <RouteMap />
        <StatusBar />
        <button
          aria-label="Route einpassen"
          className="absolute right-12 bottom-24 flex size-42 items-center justify-center rounded-full bg-[#0c4b7e] text-white shadow-[0_12px_24px_rgba(0,0,0,0.3)]"
        >
          <MdOutlineFitScreen className="size-30" />
        </button>
      </div>

      <main className="relative -mt-12 flex flex-1 flex-col rounded-t-[48px] bg-[#03131f] pt-6 text-white">
        <div className="mx-auto h-6 w-42 rounded-full bg-[#2b3743]" />

        <header className="mt-15 flex h-24 items-center px-9">
          <button aria-label="Zurück">
            <ChevronLeft className="size-24" strokeWidth={2} />
          </button>
          <h1 className="flex-1 whitespace-nowrap pr-3 text-center text-[61px] font-bold">Hermann Tungerloh-Pr...</h1>
          <button aria-label="Suchen">
            <MdSearch className="size-18" />
          </button>
        </header>

        <div className="mt-[66px] flex items-center justify-between px-[78px] text-[48px] leading-[78px]">
          <span className="flex items-center gap-4">
            <MdAvTimer className="size-[78px]" />
            1583 Std. 31 Min
          </span>
          <span className="flex items-center gap-4">
            <MdRoute className="size-[78px]" />
            81.65 km
          </span>
        </div>

        <CurveSelector />

        <button className="mt-27 flex items-center justify-between px-[78px] text-[48px] leading-[72px] font-medium">
          Vermeidungsmöglichkeiten
          <MdChevronRight className="size-18" />
        </button>

        <ActionBar />
      </main>
    </div>
  );
}
